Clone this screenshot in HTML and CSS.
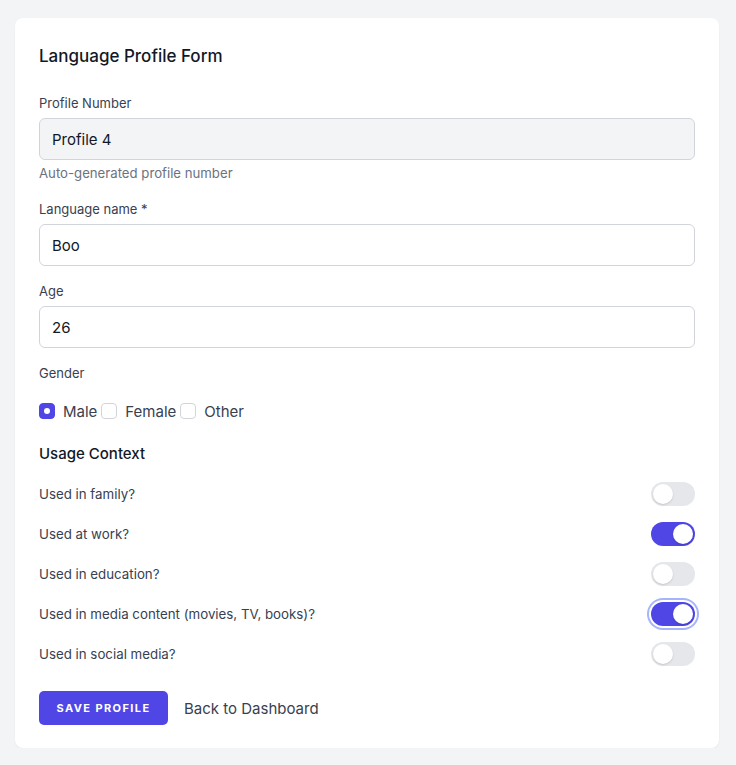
FILE: index.html
```html
<!DOCTYPE html>
<html>
<head>
<meta charset="utf-8">
<link rel="stylesheet" href="styles.css">
</head>
<body>
<div class="card">
  <h1 class="title">Language Profile Form</h1>

  <div class="field f1">
    <label class="label">Profile Number</label>
    <div class="input readonly">Profile 4</div>
    <div class="help">Auto-generated profile number</div>
  </div>

  <div class="field f2">
    <label class="label">Language name *</label>
    <div class="input">Boo</div>
  </div>

  <div class="field f3">
    <label class="label">Age</label>
    <div class="input">26</div>
  </div>

  <div class="field f4">
    <label class="label">Gender</label>
    <div class="radios">
      <span class="box checked"></span><span class="opt">Male</span>
      <span class="box"></span><span class="opt">Female</span>
      <span class="box"></span><span class="opt">Other</span>
    </div>
  </div>

  <h2 class="section">Usage Context</h2>
  <div class="toggles">
    <div class="row"><span>Used in family?</span><span class="toggle"></span></div>
    <div class="row"><span>Used at work?</span><span class="toggle on"></span></div>
    <div class="row"><span>Used in education?</span><span class="toggle"></span></div>
    <div class="row"><span>Used in media content (movies, TV, books)?</span><span class="toggle on focus"></span></div>
    <div class="row"><span>Used in social media?</span><span class="toggle"></span></div>
  </div>

  <div class="actions">
    <button class="btn">SAVE PROFILE</button>
    <a class="link">Back to Dashboard</a>
  </div>
</div>
</body>
</html>
```
FILE: styles.css
```css
* { box-sizing: border-box; }
html, body { margin: 0; padding: 0; }
body {
  background: #f3f4f6;
  font-family: Inter, "Noto Sans", sans-serif;
  color: #111827;
  padding: 18px 17px 0 15px;
}
.card {
  background: #fff;
  border-radius: 8px;
  padding: 24px 24px 23px 24px;
  box-shadow: 0 1px 2px rgba(0,0,0,0.05);
  height: 730px;
}
.title {
  margin: 0;
  font-size: 17px;
  font-weight: 450;
  line-height: 28px;
  color: #111827;
}
.field { display: flex; flex-direction: column; }
.f1 { margin-top: 23px; }
.f2 { margin-top: 18px; }
.f3 { margin-top: 15px; }
.f4 { margin-top: 15px; }
.label {
  font-size: 13px;
  line-height: 20px;
  color: #374151;
  font-weight: 400;
}
.input {
  margin-top: 5px;
  height: 42px;
  border: 1px solid #d1d5db;
  border-radius: 6px;
  padding: 0 12px;
  display: flex;
  align-items: center;
  font-size: 15px;
  color: #111827;
  background: #fff;
}
.input.readonly { background: #f3f4f6; }
.help {
  margin-top: 5px;
  font-size: 13.2px;
  line-height: 16px;
  color: #6b7280;
}
.radios {
  margin-top: 18px;
  display: flex;
  align-items: center;
  height: 20px;
  font-size: 15px;
  color: #374151;
}
.box {
  width: 16px;
  height: 16px;
  border: 1px solid #d1d5db;
  border-radius: 4px;
  background: #fff;
  display: inline-block;
}
.box.checked {
  background: #4f46e5;
  border-color: #4f46e5;
  position: relative;
}
.box.checked::after {
  content: "";
  position: absolute;
  left: 4px; top: 4px;
  width: 6px; height: 6px;
  border-radius: 50%;
  background: #fff;
}
.opt { margin-left: 8px; margin-right: 4px; }
.section {
  margin: 21px 0 0 0;
  font-size: 15px;
  font-weight: 450;
  line-height: 24px;
  color: #111827;
}
.toggles {
  margin-top: 16px;
  display: flex;
  flex-direction: column;
  gap: 16px;
}
.row {
  display: flex;
  justify-content: space-between;
  align-items: center;
  height: 24px;
  font-size: 13.3px;
  color: #374151;
}
.toggle {
  width: 44px;
  height: 24px;
  border-radius: 12px;
  background: #e5e7eb;
  position: relative;
  display: inline-block;
}
.toggle::after {
  content: "";
  position: absolute;
  top: 2px; left: 2px;
  width: 20px; height: 20px;
  border-radius: 50%;
  background: #fff;
  box-shadow: 0 1px 2px rgba(0,0,0,0.15);
}
.toggle.on { background: #4f46e5; }
.toggle.on::after { left: 22px; }
.toggle.focus { box-shadow: 0 0 0 2px #fff, 0 0 0 4px #a5b4fc; }
.actions {
  margin-top: 25px;
  display: flex;
  align-items: center;
  gap: 16px;
}
.btn {
  height: 34px;
  width: 129px;
  border: none;
  border-radius: 5px;
  background: #4f46e5;
  color: #fff;
  font-family: Inter, "Noto Sans", sans-serif;
  font-size: 11px;
  font-weight: 700;
  letter-spacing: 1.4px;
}
.link {
  font-size: 15px;
  color: #374151;
  text-decoration: none;
}
```
